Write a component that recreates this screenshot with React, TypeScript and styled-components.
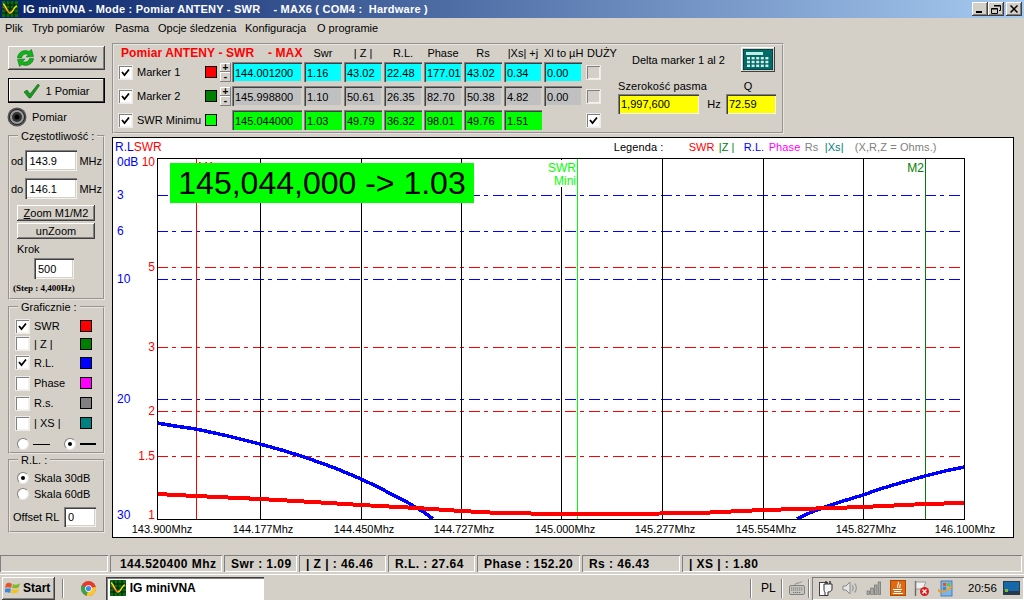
import { Fragment } from "react";
import styled, { createGlobalStyle } from "styled-components";

const GlobalStyle = createGlobalStyle`
  html, body {
    margin: 0;
    padding: 0;
    background: #d4d0c8;
  }
  * {
    box-sizing: border-box;
  }
`;

const Screen = styled.div`
  width: 1024px;
  height: 600px;
  overflow: hidden;
  display: flex;
  flex-direction: column;
  background: #d4d0c8;
  color: #000;
  font-family: "Liberation Sans", Arial, sans-serif;
  font-size: 11px;
`;

const TitleBar = styled.div`
  height: 18px;
  display: flex;
  align-items: center;
  padding: 0 2px 0 2px;
  background: linear-gradient(90deg, #0a246a 0%, #a6caf0 100%);
`;

const TitleText = styled.div`
  flex: 1;
  margin-left: 5px;
  color: #fff;
  font-size: 11px;
  font-weight: bold;
  letter-spacing: 0.22px;
  white-space: pre;
`;

const WinButtons = styled.div`
  display: flex;
  margin-right: 0;
`;

const WinButton = styled.div<{ $gap?: number }>`
  width: 16px;
  height: 14px;
  margin-left: ${(p) => p.$gap ?? 0}px;
  display: flex;
  align-items: center;
  justify-content: center;
  background: #d4d0c8;
  box-shadow: inset -1px -1px 0 #404040, inset 1px 1px 0 #fff, inset -2px -2px 0 #808080;
`;

const MenuBar = styled.div`
  height: 20px;
  display: flex;
  align-items: center;
  padding-left: 5px;
  font-size: 11px;
`;

const MenuItem = styled.span<{ $w: number }>`
  width: ${(p) => p.$w}px;
  white-space: nowrap;
`;

const Main = styled.div`
  flex: 1;
  display: flex;
  gap: 7px;
  padding-left: 8px;
  min-height: 0;
`;

const Sidebar = styled.div`
  width: 97px;
  display: flex;
  flex-direction: column;
  padding-top: 8px;
`;

const BigButton = styled.button<{ $default?: boolean; $h: number }>`
  width: 97px;
  height: ${(p) => p.$h}px;
  margin: 0 0 ${(p) => (p.$default ? 4 : 8)}px;
  padding: 0;
  display: flex;
  align-items: center;
  justify-content: center;
  gap: 5px;
  border: none;
  background: #d4d0c8;
  font: 11px "Liberation Sans", Arial, sans-serif;
  color: #000;
  box-shadow: ${(p) =>
    p.$default
      ? "inset 0 0 0 1px #000, inset -2px -2px 0 #404040, inset 2px 2px 0 #fff"
      : "inset -1px -1px 0 #404040, inset 1px 1px 0 #fff, inset -2px -2px 0 #808080"};
`;

const IndicatorRow = styled.div`
  height: 19px;
  display: flex;
  align-items: center;
  gap: 5px;
  margin-left: -1px;
  font-size: 11px;
`;

const Group = styled.fieldset<{ $h: number; $mt: number; $pt?: number }>`
  height: ${(p) => p.$h}px;
  margin: ${(p) => p.$mt}px 0 0;
  padding: ${(p) => p.$pt ?? 0}px 1px 0;
  min-width: 0;
  border: 2px groove #e8e6e0;
  display: flex;
  flex-direction: column;
`;

const GroupTitle = styled.legend`
  margin-left: 7px;
  padding: 0 3px;
  font-size: 11px;
  line-height: 12px;
  white-space: nowrap;
`;

const FreqRow = styled.div<{ $mt: number }>`
  display: flex;
  align-items: center;
  height: 21px;
  margin-top: ${(p) => p.$mt}px;
  font-size: 11px;
`;

const FreqLabel = styled.span`
  width: 15px;
`;

const TextBox = styled.div<{ $w: number; $h?: number }>`
  width: ${(p) => p.$w}px;
  height: ${(p) => p.$h ?? 21}px;
  padding: 0 0 0 4px;
  display: flex;
  align-items: center;
  background: #fff;
  font-size: 11px;
  box-shadow: inset 1px 1px 0 #808080, inset 2px 2px 0 #404040, inset -1px -1px 0 #f4f2ee, inset -2px -2px 0 #d4d0c8;
`;

const Unit = styled.span`
  margin-left: 2px;
  font-size: 11px;
`;

const SmallButton = styled.button<{ $mt: number }>`
  width: 78px;
  height: 16px;
  margin: ${(p) => p.$mt}px 0 0 6px;
  padding: 0;
  border: none;
  background: #d4d0c8;
  font: 11px "Liberation Sans", Arial, sans-serif;
  color: #000;
  box-shadow: inset -1px -1px 0 #404040, inset 1px 1px 0 #fff, inset -2px -2px 0 #808080;
`;

const KrokLabel = styled.div`
  margin: 4px 0 0 6px;
  height: 13px;
  font-size: 11px;
`;

const KrokBox = styled.div`
  margin: 2px 0 0 23px;
`;

const StepNote = styled.div`
  margin: 4px 0 0 2px;
  font-family: "Liberation Serif", serif;
  font-size: 9px;
  font-weight: bold;
  white-space: nowrap;
`;

const TraceRow = styled.div<{ $h: number }>`
  height: ${(p) => p.$h}px;
  display: flex;
  align-items: center;
  padding-left: 5px;
  font-size: 11px;
`;

const TraceName = styled.span`
  width: 46px;
  margin-left: 5px;
`;

const Swatch = styled.span<{ $c: string; $size?: number }>`
  width: ${(p) => p.$size ?? 12}px;
  height: ${(p) => p.$size ?? 12}px;
  flex: none;
  background: ${(p) => p.$c};
  border: 1px solid #000;
`;

const CheckFrame = styled.span<{ $dim?: boolean }>`
  width: 13px;
  height: 13px;
  flex: none;
  display: inline-flex;
  align-items: center;
  justify-content: center;
  background: ${(p) => (p.$dim ? "#d4d0c8" : "#fff")};
  box-shadow: inset 1px 1px 0 #808080, inset -1px -1px 0 #f4f2ee, 0 0 0 1px #eeece8;
`;

const Check = ({ on, dim }: { on?: boolean; dim?: boolean }) => (
  <CheckFrame $dim={dim}>
    {on && (
      <svg width="9" height="9" viewBox="0 0 9 9">
        <path d="M1 4 L3.5 7 L8 1.5" fill="none" stroke="#000" strokeWidth="1.8" />
      </svg>
    )}
  </CheckFrame>
);

const RadioCircle = styled.span`
  width: 12px;
  height: 12px;
  flex: none;
  display: inline-flex;
  align-items: center;
  justify-content: center;
  border-radius: 50%;
  background: #fff;
  border: 1px solid #808080;
  border-right-color: #e8e6e0;
  border-bottom-color: #e8e6e0;
`;

const RadioDot = styled.span`
  width: 4px;
  height: 4px;
  border-radius: 50%;
  background: #000;
`;

const Radio = ({ on }: { on?: boolean }) => <RadioCircle>{on && <RadioDot />}</RadioCircle>;

const LineSample = styled.span<{ $t: number; $w: number; $mr?: number }>`
  width: ${(p) => p.$w}px;
  height: ${(p) => p.$t}px;
  margin: 0 ${(p) => p.$mr ?? 0}px 0 -1px;
  background: #000;
`;

const RadioRow = styled.div<{ $mt: number }>`
  display: flex;
  align-items: center;
  height: 14px;
  margin-top: ${(p) => p.$mt}px;
  padding-left: 6px;
  gap: 5px;
`;

const OffsetRow = styled.div`
  display: flex;
  align-items: center;
  justify-content: space-between;
  margin-top: 6px;
  padding: 0 6px 0 2px;
`;

const Content = styled.div`
  flex: 1;
  display: flex;
  flex-direction: column;
  padding-top: 5px;
  min-width: 0;
`;

const TopPanel = styled.div`
  width: 672px;
  height: 91px;
  display: flex;
  padding: 0 0 0 5px;
  border: 2px groove #e8e6e0;
`;

const MarkerGrid = styled.div`
  width: 499px;
  display: grid;
  grid-template-columns: 18px 68px 15px 12px 72px repeat(7, 40px) 33px;
  grid-template-rows: 15px repeat(3, 24px);
  align-items: center;
`;

const PanelTitle = styled.div`
  grid-column: 1 / 6;
  margin-left: 2px;
  color: #f00;
  font-size: 12px;
  font-weight: bold;
  letter-spacing: 0.1px;
  white-space: pre;
`;

const ColHead = styled.div`
  text-align: center;
  padding-right: 2px;
  white-space: nowrap;
`;

const DuzyHead = styled.div`
  padding-left: 3px;
  overflow: hidden;
  white-space: nowrap;
`;

const MarkerName = styled.div`
  white-space: nowrap;
`;

const Spinner = styled.div`
  width: 11px;
  height: 19px;
  display: flex;
  flex-direction: column;
`;

const SpinPart = styled.div`
  flex: 1;
  background: #d4d0c8;
  display: flex;
  align-items: center;
  justify-content: center;
  line-height: 9px;
  font-size: 10px;
  font-weight: bold;
  box-shadow: inset -1px -1px 0 #808080, inset 1px 1px 0 #fff;
`;

const Field = styled.div<{ $bg: string }>`
  height: 20px;
  margin-right: 2px;
  padding: 1px 0 0 3px;
  display: flex;
  align-items: center;
  background: ${(p) => p.$bg};
  font-size: 11px;
  white-space: nowrap;
  box-shadow: inset 1px 1px 0 #808080, inset 2px 2px 0 #404040, inset -1px -1px 0 #d4d0c8;
`;

const PlainField = styled(Field)`
  box-shadow: inset 1px 1px 0 #808080, inset 2px 2px 0 #404040;
`;

const CheckCell = styled.div`
  padding-left: 3px;
  display: flex;
`;

const DeltaPanel = styled.div`
  width: 160px;
  display: grid;
  grid-template-columns: 81px 27px 50px;
  grid-template-rows: 27px 20px 24px;
  align-items: center;
`;

const DeltaTop = styled.div`
  grid-column: 1 / 4;
  display: flex;
  align-items: center;
  justify-content: space-between;
  padding-left: 14px;
  margin-top: 2px;
  white-space: nowrap;
`;

const CalcButton = styled.div`
  width: 34px;
  height: 25px;
  margin-right: 1px;
  padding: 2px;
  background: #d4d0c8;
  box-shadow: inset -1px -1px 0 #404040, inset 1px 1px 0 #fff;
`;

const BandLabel = styled.div`
  grid-column: 1 / 3;
  white-space: nowrap;
  letter-spacing: 0.1px;
  align-self: end;
`;

const QLabel = styled.div`
  text-align: center;
  padding-right: 6px;
  align-self: end;
`;

const YellowBox = styled.div`
  height: 20px;
  padding-left: 3px;
  display: flex;
  align-items: center;
  background: #ff0;
  font-size: 11px;
  box-shadow: inset 1px 1px 0 #808080, inset 2px 2px 0 #404040, inset -1px -1px 0 #f4f2ee;
`;

const HzLabel = styled.div`
  text-align: center;
  padding-left: 3px;
`;

const ChartFrame = styled.div`
  position: relative;
  width: 902px;
  height: 401px;
  margin-top: 3px;
  background: #fff;
  border: 1px solid #000;
  display: flex;
  flex-direction: column;
`;

const ChartHead = styled.div`
  height: 17px;
  display: flex;
  align-items: center;
  font-size: 12px;
`;

const AxisTitle = styled.span<{ $c: string }>`
  color: ${(p) => p.$c};
  &:first-child {
    margin-left: 2px;
  }
`;

const Legend = styled.div`
  margin-left: 452px;
  display: flex;
  font-size: 11px;
  white-space: pre;
  letter-spacing: 0.1px;
`;

const LegendItem = styled.span<{ $c: string; $w: number }>`
  width: ${(p) => p.$w}px;
  color: ${(p) => p.$c};
`;

const ChartSvg = styled.svg`
  display: block;
  flex: 1;
  width: 900px;
  overflow: visible;
`;

const ChartText = styled.text<{ $c?: string; $s?: number }>`
  fill: ${(p) => p.$c ?? "#000"};
  font-family: "Liberation Sans", Arial, sans-serif;
  font-size: ${(p) => p.$s ?? 12}px;
`;

const Banner = styled.div`
  position: absolute;
  left: 57px;
  top: 25px;
  width: 304px;
  height: 40px;
  display: flex;
  align-items: center;
  justify-content: center;
  background: #0f0;
  color: #000;
  font-size: 32px;
  white-space: nowrap;
`;

const StatusBar = styled.div`
  height: 17px;
  margin-bottom: 2px;
  display: flex;
  gap: 2px;
  font-size: 12px;
  font-weight: bold;
  letter-spacing: 0.45px;
`;

const StatusCell = styled.div<{ $w: number; $pl?: number }>`
  width: ${(p) => p.$w}px;
  flex: none;
  display: flex;
  align-items: center;
  padding-left: ${(p) => p.$pl ?? 7}px;
  white-space: nowrap;
  box-shadow: inset 1px 1px 0 #808080, inset -1px -1px 0 #fff;
`;

const Taskbar = styled.div`
  height: 26px;
  display: flex;
  align-items: center;
  border-top: 1px solid #fff;
  padding: 1px 0 0 2px;
`;

const StartButton = styled.div`
  width: 53px;
  height: 23px;
  display: flex;
  align-items: center;
  gap: 2px;
  padding-left: 3px;
  font-size: 12px;
  font-weight: bold;
  box-shadow: inset -1px -1px 0 #404040, inset 1px 1px 0 #fff, inset -2px -2px 0 #808080;
`;

const Divider = styled.span<{ $ml: number; $w?: number }>`
  width: ${(p) => p.$w ?? 2}px;
  height: 19px;
  flex: none;
  margin-left: ${(p) => p.$ml}px;
  border-left: 1px solid #808080;
  border-right: 1px solid #fff;
`;

const TaskIcon = styled.span<{ $ml: number }>`
  display: inline-flex;
  flex: none;
  margin-left: ${(p) => p.$ml}px;
`;

const TaskButton = styled.div`
  width: 159px;
  height: 23px;
  margin-left: 10px;
  display: flex;
  align-items: center;
  gap: 4px;
  padding-left: 4px;
  background: #fff;
  font-size: 12px;
  font-weight: bold;
  box-shadow: inset 1px 1px 0 #404040, inset 2px 2px 0 #808080, inset -1px -1px 0 #fff;
`;

const LangLabel = styled.span`
  margin-left: 9px;
  width: 20px;
  font-size: 12px;
`;

const Tray = styled.div`
  flex: none;
  width: 212px;
  height: 23px;
  margin-left: 2px;
  display: flex;
  align-items: center;
  padding-left: 7px;
  box-shadow: inset 1px 1px 0 #808080, inset -1px -1px 0 #fff;
`;

const Clock = styled.span`
  margin-left: 14px;
  width: 35px;
  font-size: 11.5px;
`;

const AppIcon = ({ size }: { size: number }) => (
  <svg width={size} height={size} viewBox="0 0 16 16">
    <rect width="16" height="16" fill="#0b6b12" />
    <path d="M0 4H16M0 8H16M0 12H16M4 0V16M8 0V16M12 0V16" stroke="#000" strokeWidth="0.7" />
    <path d="M1 3 C4 4 5 12 8 12 S12 5 15 5" fill="none" stroke="#f5e31a" strokeWidth="1.5" />
    <path d="M1 6 C4 7 6 14 9 10" fill="none" stroke="#e33" strokeWidth="1" />
  </svg>
);

const RefreshArrows = () => (
  <svg width="19" height="18" viewBox="0 0 19 18">
    <path d="M1.5 9 C2 3 8 0 13 2.5 L15.5 0.5 L17.5 7.5 L10 8 L12.5 5.5 C9 4 6.5 5.5 5.5 9 Z" fill="#0fb51a" stroke="#086012" strokeWidth="0.5" />
    <path d="M17.5 9.5 C17 15 11 18 6 15.5 L3.5 17.5 L1.5 10.5 L9 10 L6.5 12.5 C10 14 12.5 12.5 13.5 9.5 Z" fill="#0fb51a" stroke="#086012" strokeWidth="0.5" />
  </svg>
);

const GreenTick = () => (
  <svg width="17" height="16" viewBox="0 0 17 16">
    <path d="M1 9 L4 7 L7 11 L15 1 L16.5 2.5 L7.5 15 L6 15 Z" fill="#189a1c" stroke="#0c5c10" strokeWidth="0.6" />
  </svg>
);

const Led = () => (
  <svg width="20" height="20" viewBox="0 0 20 20">
    <circle cx="10" cy="10" r="9.5" fill="#555" />
    <circle cx="10" cy="10" r="7.5" fill="#999" stroke="#222" />
    <circle cx="10" cy="10" r="5" fill="#333" />
    <circle cx="10" cy="10" r="2.5" fill="#000" />
  </svg>
);

const CalcIcon = () => (
  <svg width="30" height="21" viewBox="0 0 30 21">
    <rect width="30" height="21" fill="#046a68" stroke="#02202c" />
    <rect x="3" y="3" width="17" height="3" fill="#bfeee8" />
    {[0, 1, 2].map((r) =>
      [0, 1, 2, 3, 4].map((c) => (
        <rect key={`${r}-${c}`} x={4 + c * 4.6} y={8 + r * 3.8} width="3" height="2.4" fill="#cfeeea" />
      ))
    )}
  </svg>
);

const ChromeIcon = () => (
  <svg width="15" height="15" viewBox="0 0 16 16">
    <circle cx="8" cy="8" r="8" fill="#e33b2e" />
    <path d="M8 8 L1 4.5 A8 8 0 0 0 6 15.8 Z" fill="#2ea84a" />
    <path d="M8 8 L15.7 6 A8 8 0 0 1 6 15.8 Z" fill="#f7c92f" />
    <circle cx="8" cy="8" r="3.6" fill="#fff" />
    <circle cx="8" cy="8" r="2.8" fill="#4a88e8" />
  </svg>
);

const StartFlag = () => (
  <svg width="16" height="15" viewBox="0 0 16 15">
    <path d="M1 3 C3 1 5 2 7 3 L6 7 C4 6 2 6 0 7 Z" fill="#e2552a" />
    <path d="M8 3 C10 4 13 4 15 2 L14 6 C12 8 9 7 7 7 Z" fill="#7fb92c" />
    <path d="M0 8 C2 7 4 7 6 8 L5 12 C3 11 1 11 -1 12 Z" fill="#3b87d8" />
    <path d="M7 8 C9 9 12 9 14 7 L13 11 C11 13 8 12 6 12 Z" fill="#f2c221" />
  </svg>
);

const KeyboardIcon = () => (
  <svg width="16" height="16" viewBox="0 0 16 16">
    <path d="M6 5 C6 2 12 4 13 1" fill="none" stroke="#888" />
    <rect x="0.5" y="5.5" width="15" height="9" rx="1.5" fill="#c8c6c0" stroke="#808080" />
    <path d="M2 8H14M2 10H14M4 12.5H12" stroke="#777" strokeDasharray="1.3 0.7" />
  </svg>
);

const PlugIcon = () => (
  <svg width="14" height="16" viewBox="0 0 14 16">
    <rect x="0.5" y="2.5" width="8" height="13" fill="#fff" stroke="#444" />
    <path d="M5 4 H13 V9 C13 11 11 12 9 12 V15.5 H6 V12 C5 12 5 10 5 9 Z" fill="#f4f4f4" stroke="#333" />
    <path d="M7 1V4M11 1V4" stroke="#333" strokeWidth="1.4" />
  </svg>
);

const SpeakerIcon = () => (
  <svg width="16" height="16" viewBox="0 0 16 16">
    <path d="M1 6 H4 L8 2 V14 L4 10 H1 Z" fill="#e6e6e6" stroke="#888" />
    <path d="M10 5 C11.5 7 11.5 9 10 11 M12.5 3.5 C15 6 15 10 12.5 12.5" fill="none" stroke="#999" strokeWidth="1.2" />
  </svg>
);

const SignalIcon = () => (
  <svg width="16" height="14" viewBox="0 0 16 14">
    {[0, 1, 2, 3].map((i) => (
      <rect key={i} x={1 + i * 3.7} y={10 - i * 3} width="2.6" height={3.5 + i * 3} fill="#a8a8a4" stroke="#666" strokeWidth="0.6" />
    ))}
  </svg>
);

const JavaIcon = () => (
  <svg width="16" height="16" viewBox="0 0 16 16">
    <rect width="16" height="16" fill="#e0690f" />
    <rect x="0.5" y="0.5" width="15" height="15" fill="none" stroke="#a84a08" />
    <path d="M8 2 C10 4 6 5 8 8 M10 4 C11 5 9 6 10 8" fill="none" stroke="#fff" strokeWidth="1.1" />
    <path d="M3 9.5 H12 M4 11.5 H11 M3 13.5 H13" stroke="#fff" strokeWidth="1.1" />
  </svg>
);

const ActionFlag = () => (
  <svg width="16" height="17" viewBox="0 0 16 17">
    <path d="M1.5 1V16" stroke="#666" strokeWidth="1.4" />
    <path d="M2 2 H12 L10 6 L12 9 H2 Z" fill="#f0f0f0" stroke="#999" />
    <circle cx="10.5" cy="11.5" r="4.5" fill="#d92020" />
    <path d="M8.5 9.5 L12.5 13.5 M12.5 9.5 L8.5 13.5" stroke="#fff" strokeWidth="1.3" />
  </svg>
);

const UpdateIcon = () => (
  <svg width="16" height="17" viewBox="0 0 16 17">
    <rect x="3" y="1" width="11" height="15" fill="#7db4e8" stroke="#4a7fb8" />
    <rect x="5" y="3" width="3" height="3" fill="#e2552a" />
    <rect x="9" y="3" width="3" height="3" fill="#7fb92c" />
    <rect x="5" y="7" width="3" height="3" fill="#3b87d8" />
    <rect x="9" y="7" width="3" height="3" fill="#f2c221" />
    <path d="M1 9 C-1 14 8 12 15 6" fill="none" stroke="#ef9a1e" strokeWidth="1.6" />
  </svg>
);

const DesktopIcon = () => (
  <svg width="17" height="14" viewBox="0 0 17 14">
    <rect x="0.5" y="0.5" width="16" height="13" fill="#1668a8" stroke="#2c3b4c" />
    <rect x="1" y="10" width="15" height="3" fill="#26384a" />
    <rect x="2" y="8" width="3" height="3" fill="#7fb92c" />
  </svg>
);

const markers = [
  {
    name: "Marker 1",
    color: "#f00",
    bg: "#0ff",
    spin: true,
    values: ["144.001200", "1.16", "43.02", "22.48", "177.01", "43.02", "0.34", "0.00"],
    big: false,
  },
  {
    name: "Marker 2",
    color: "#008000",
    bg: "#c0c0c0",
    spin: true,
    values: ["145.998800", "1.10", "50.61", "26.35", "82.70", "50.38", "4.82", "0.00"],
    big: false,
  },
  {
    name: "SWR Minimu",
    color: "#0f0",
    bg: "#0f0",
    spin: false,
    values: ["145.044000", "1.03", "49.79", "36.32", "98.01", "49.76", "1.51"],
    big: true,
  },
];

const traces = [
  { name: "SWR", color: "#f00", on: true, h: 18 },
  { name: "| Z |", color: "#008000", on: false, h: 17 },
  { name: "R.L.", color: "#00f", on: true, h: 21 },
  { name: "Phase", color: "#f0f", on: false, h: 20 },
  { name: "R.s.", color: "#808080", on: false, h: 20 },
  { name: "| XS |", color: "#008080", on: false, h: 20 },
];

const gridX = [260, 361, 461, 561, 662, 763, 863];
const swrLines = [267, 347, 411, 456];
const rlLines = [195, 231, 279, 399];
const swrLabels = [
  { t: "10", y: 166 },
  { t: "5", y: 271 },
  { t: "3", y: 351 },
  { t: "2", y: 415 },
  { t: "1.5", y: 460 },
  { t: "1", y: 519 },
];
const rlLabels = [
  { t: "0dB", y: 166 },
  { t: "3", y: 199 },
  { t: "6", y: 235 },
  { t: "10", y: 283 },
  { t: "20", y: 403 },
  { t: "30", y: 519 },
];
const freqLabels = [
  { t: "143.900Mhz", x: 162 },
  { t: "144.177Mhz", x: 263 },
  { t: "144.450Mhz", x: 364 },
  { t: "144.727Mhz", x: 464 },
  { t: "145.000Mhz", x: 565 },
  { t: "145.277Mhz", x: 665 },
  { t: "145.554Mhz", x: 766 },
  { t: "145.827Mhz", x: 866 },
  { t: "146.100Mhz", x: 965 },
];

const redCurve = "157,494 196,496 260,499 313,502 361,505 417,508 461,511 500,513 561,514 620,514 660,513.5 700,513 763,510 800,509 863,507 925,504 964,503";
const blueLeft = "157,423 175,426 196,429 228,436 260,444 285,451 307,458 335,468 361,479 378,487 393,495 405,501 417,508 425,513 433,519";
const blueRight = "797,519 807,514 817,510 828,506 840,502 863,495 880,489 900,483 925,476 945,471 964,467";

const dash = "11 4 4 5";

const Chart = () => (
  <ChartSvg viewBox="113 155 900 382" preserveAspectRatio="none">
    {swrLines.map((y) => (
      <line key={y} x1="157" x2="964" y1={y + 0.5} y2={y + 0.5} stroke="#f00" strokeDasharray={dash} shapeRendering="crispEdges" />
    ))}
    {rlLines.map((y) => (
      <line key={y} x1="157" x2="964" y1={y + 0.5} y2={y + 0.5} stroke="#00f" strokeDasharray={dash} shapeRendering="crispEdges" />
    ))}
    {gridX.map((x) => (
      <line key={x} x1={x + 0.5} x2={x + 0.5} y1="158" y2="520" stroke="#000" shapeRendering="crispEdges" />
    ))}
    <line x1="196.5" x2="196.5" y1="158" y2="520" stroke="#f00" shapeRendering="crispEdges" />
    <line x1="577.5" x2="577.5" y1="158" y2="520" stroke="#0f0" shapeRendering="crispEdges" />
    <line x1="925.5" x2="925.5" y1="158" y2="520" stroke="#008000" shapeRendering="crispEdges" />

    <rect x="549" y="160" width="28" height="27" fill="#fff" />
    <rect x="906" y="160" width="19" height="14" fill="#fff" />
    <ChartText x="576" y="172" textAnchor="end" $c="#0f0">SWR</ChartText>
    <ChartText x="576" y="185" textAnchor="end" $c="#0f0">Mini</ChartText>
    <ChartText x="924" y="172" textAnchor="end" $c="#008000">M2</ChartText>
    <ChartText x="198" y="171" $c="#f00">M1</ChartText>

    <polyline points={blueLeft} fill="none" stroke="#00f" strokeWidth="3.5" shapeRendering="crispEdges" />
    <polyline points={blueRight} fill="none" stroke="#00f" strokeWidth="3.5" shapeRendering="crispEdges" />
    <polyline points={redCurve} fill="none" stroke="#f00" strokeWidth="4" shapeRendering="crispEdges" />

    <rect x="157.5" y="158.5" width="807" height="361" fill="none" stroke="#000" shapeRendering="crispEdges" />

    {swrLabels.map((l) => (
      <ChartText key={l.t} x="155" y={l.y} textAnchor="end" $c="#f00">{l.t}</ChartText>
    ))}
    {rlLabels.map((l) => (
      <ChartText key={l.t} x="117" y={l.y} $c="#00f">{l.t}</ChartText>
    ))}
    {freqLabels.map((l) => (
      <ChartText key={l.t} x={l.x} y="533" textAnchor="middle" $s={11}>{l.t}</ChartText>
    ))}
  </ChartSvg>
);

const App = () => {
  return (
    <Screen>
      <GlobalStyle />
      <TitleBar>
        <AppIcon size={16} />
        <TitleText>{"IG miniVNA - Mode : Pomiar ANTENY - SWR    - MAX6 ( COM4 :  Hardware )"}</TitleText>
        <WinButtons>
          <WinButton>
            <svg width="8" height="8" viewBox="0 0 8 8">
              <rect x="0" y="6" width="6" height="2" fill="#000" />
            </svg>
          </WinButton>
          <WinButton>
            <svg width="10" height="9" viewBox="0 0 10 9">
              <path d="M3 .5H9.5V5.5H8M.5 3.5H6.5V8.5H.5Z" fill="none" stroke="#000" />
              <path d="M3 1H9.5M.5 4H6.5" stroke="#000" />
            </svg>
          </WinButton>
          <WinButton $gap={2}>
            <svg width="8" height="8" viewBox="0 0 8 8">
              <path d="M.5 .5L7.5 7.5M7.5 .5L.5 7.5" stroke="#000" strokeWidth="1.5" />
            </svg>
          </WinButton>
        </WinButtons>
      </TitleBar>

      <MenuBar>
        <MenuItem $w={27}>Plik</MenuItem>
        <MenuItem $w={83}>Tryb pomiarów</MenuItem>
        <MenuItem $w={43}>Pasma</MenuItem>
        <MenuItem $w={87}>Opcje śledzenia</MenuItem>
        <MenuItem $w={72}>Konfiguracja</MenuItem>
        <MenuItem $w={70}>O programie</MenuItem>
      </MenuBar>

      <Main>
        <Sidebar>
          <BigButton $h={24}>
            <RefreshArrows />x pomiarów
          </BigButton>
          <BigButton $h={25} $default>
            <GreenTick />1 Pomiar
          </BigButton>
          <IndicatorRow>
            <Led />
            Pomiar
          </IndicatorRow>

          <Group $h={170} $mt={4}>
            <GroupTitle>Częstotliwość :</GroupTitle>
            <FreqRow $mt={8}>
              <FreqLabel>od</FreqLabel>
              <TextBox $w={54}>143.9</TextBox>
              <Unit>MHz</Unit>
            </FreqRow>
            <FreqRow $mt={7}>
              <FreqLabel>do</FreqLabel>
              <TextBox $w={54}>146.1</TextBox>
              <Unit>MHz</Unit>
            </FreqRow>
            <SmallButton $mt={6}>
              <u>Z</u>oom M1/M2
            </SmallButton>
            <SmallButton $mt={2}>unZoom</SmallButton>
            <KrokLabel>Krok</KrokLabel>
            <KrokBox>
              <TextBox $w={40}>500</TextBox>
            </KrokBox>
            <StepNote>(Step : 4,400Hz)</StepNote>
          </Group>

          <Group $h={153} $mt={1} $pt={4}>
            <GroupTitle>Graficznie :</GroupTitle>
            {traces.map((t) => (
              <TraceRow key={t.name} $h={t.h}>
                <Check on={t.on} />
                <TraceName>{t.name}</TraceName>
                <Swatch $c={t.color} />
              </TraceRow>
            ))}
            <RadioRow $mt={4}>
              <Radio />
              <LineSample $t={1} $w={17} $mr={9} />
              <Radio on />
              <LineSample $t={2} $w={16} />
            </RadioRow>
          </Group>

          <Group $h={79} $mt={0}>
            <GroupTitle>R.L. :</GroupTitle>
            <RadioRow $mt={5}>
              <Radio on />
              Skala 30dB
            </RadioRow>
            <RadioRow $mt={2}>
              <Radio />
              Skala 60dB
            </RadioRow>
            <OffsetRow>
              Offset RL
              <TextBox $w={32} $h={20}>0</TextBox>
            </OffsetRow>
          </Group>
        </Sidebar>

        <Content>
          <TopPanel>
            <MarkerGrid>
              <PanelTitle>{"Pomiar ANTENY - SWR    - MAX"}</PanelTitle>
              <ColHead>Swr</ColHead>
              <ColHead>| Z |</ColHead>
              <ColHead>R.L.</ColHead>
              <ColHead>Phase</ColHead>
              <ColHead>Rs</ColHead>
              <ColHead>|Xs| +j</ColHead>
              <ColHead>Xl to µH</ColHead>
              <DuzyHead>DUŻY</DuzyHead>

              {markers.map((m) => (
                <Fragment key={m.name}>
                  <Check on />
                  <MarkerName>{m.name}</MarkerName>
                  <Swatch $c={m.color} />
                  {m.spin ? (
                    <Spinner>
                      <SpinPart>+</SpinPart>
                      <SpinPart>-</SpinPart>
                    </Spinner>
                  ) : (
                    <span />
                  )}
                  {m.values.map((v, i) =>
                    m.big ? (
                      <PlainField key={i} $bg={m.bg}>{v}</PlainField>
                    ) : (
                      <Field key={i} $bg={m.bg}>{v}</Field>
                    )
                  )}
                  {m.big && <span />}
                  <CheckCell>
                    <Check on={m.big} dim={!m.big} />
                  </CheckCell>
                </Fragment>
              ))}
            </MarkerGrid>

            <DeltaPanel>
              <DeltaTop>
                Delta marker 1 al 2
                <CalcButton>
                  <CalcIcon />
                </CalcButton>
              </DeltaTop>
              <BandLabel>Szerokość pasma</BandLabel>
              <QLabel>Q</QLabel>
              <YellowBox>1,997,600</YellowBox>
              <HzLabel>Hz</HzLabel>
              <YellowBox>72.59</YellowBox>
            </DeltaPanel>
          </TopPanel>

          <ChartFrame>
            <ChartHead>
              <AxisTitle $c="#00f">R.L</AxisTitle>
              <AxisTitle $c="#f00">SWR</AxisTitle>
              <Legend>
                <LegendItem $c="#000" $w={75}>Legenda :</LegendItem>
                <LegendItem $c="#f00" $w={30}>SWR</LegendItem>
                <LegendItem $c="#008000" $w={25}>|Z |</LegendItem>
                <LegendItem $c="#00f" $w={25}>R.L.</LegendItem>
                <LegendItem $c="#f0f" $w={36}>Phase</LegendItem>
                <LegendItem $c="#808080" $w={20}>Rs</LegendItem>
                <LegendItem $c="#008080" $w={30}>|Xs|</LegendItem>
                <LegendItem $c="#808080" $w={80}>(X,R,Z = Ohms.)</LegendItem>
              </Legend>
            </ChartHead>
            <Chart />
            <Banner>145,044,000 -&gt; 1.03</Banner>
          </ChartFrame>
        </Content>
      </Main>

      <StatusBar>
        <StatusCell $w={108} />
        <StatusCell $w={112} $pl={10}>144.520400 Mhz</StatusCell>
        <StatusCell $w={73}>Swr : 1.09</StatusCell>
        <StatusCell $w={87}>| Z | : 46.46</StatusCell>
        <StatusCell $w={87}>R.L. : 27.64</StatusCell>
        <StatusCell $w={103}>Phase : 152.20</StatusCell>
        <StatusCell $w={98}>Rs : 46.43</StatusCell>
        <StatusCell $w={340}>| XS | : 1.80</StatusCell>
      </StatusBar>

      <Taskbar>
        <StartButton>
          <StartFlag />
          Start
        </StartButton>
        <Divider $ml={7} />
        <TaskIcon $ml={17}>
          <ChromeIcon />
        </TaskIcon>
        <TaskButton>
          <AppIcon size={16} />
          IG miniVNA
        </TaskButton>
        <Divider $ml={486} />
        <LangLabel>PL</LangLabel>
        <Divider $ml={0} />
        <TaskIcon $ml={6}>
          <KeyboardIcon />
        </TaskIcon>
        <Divider $ml={3} />
        <Tray>
          <PlugIcon />
          <TaskIcon $ml={9}>
            <SpeakerIcon />
          </TaskIcon>
          <TaskIcon $ml={8}>
            <SignalIcon />
          </TaskIcon>
          <TaskIcon $ml={8}>
            <JavaIcon />
          </TaskIcon>
          <TaskIcon $ml={8}>
            <ActionFlag />
          </TaskIcon>
          <TaskIcon $ml={8}>
            <UpdateIcon />
          </TaskIcon>
          <Clock>20:56</Clock>
          <DesktopIcon />
        </Tray>
      </Taskbar>
    </Screen>
  );
};

export default App;
